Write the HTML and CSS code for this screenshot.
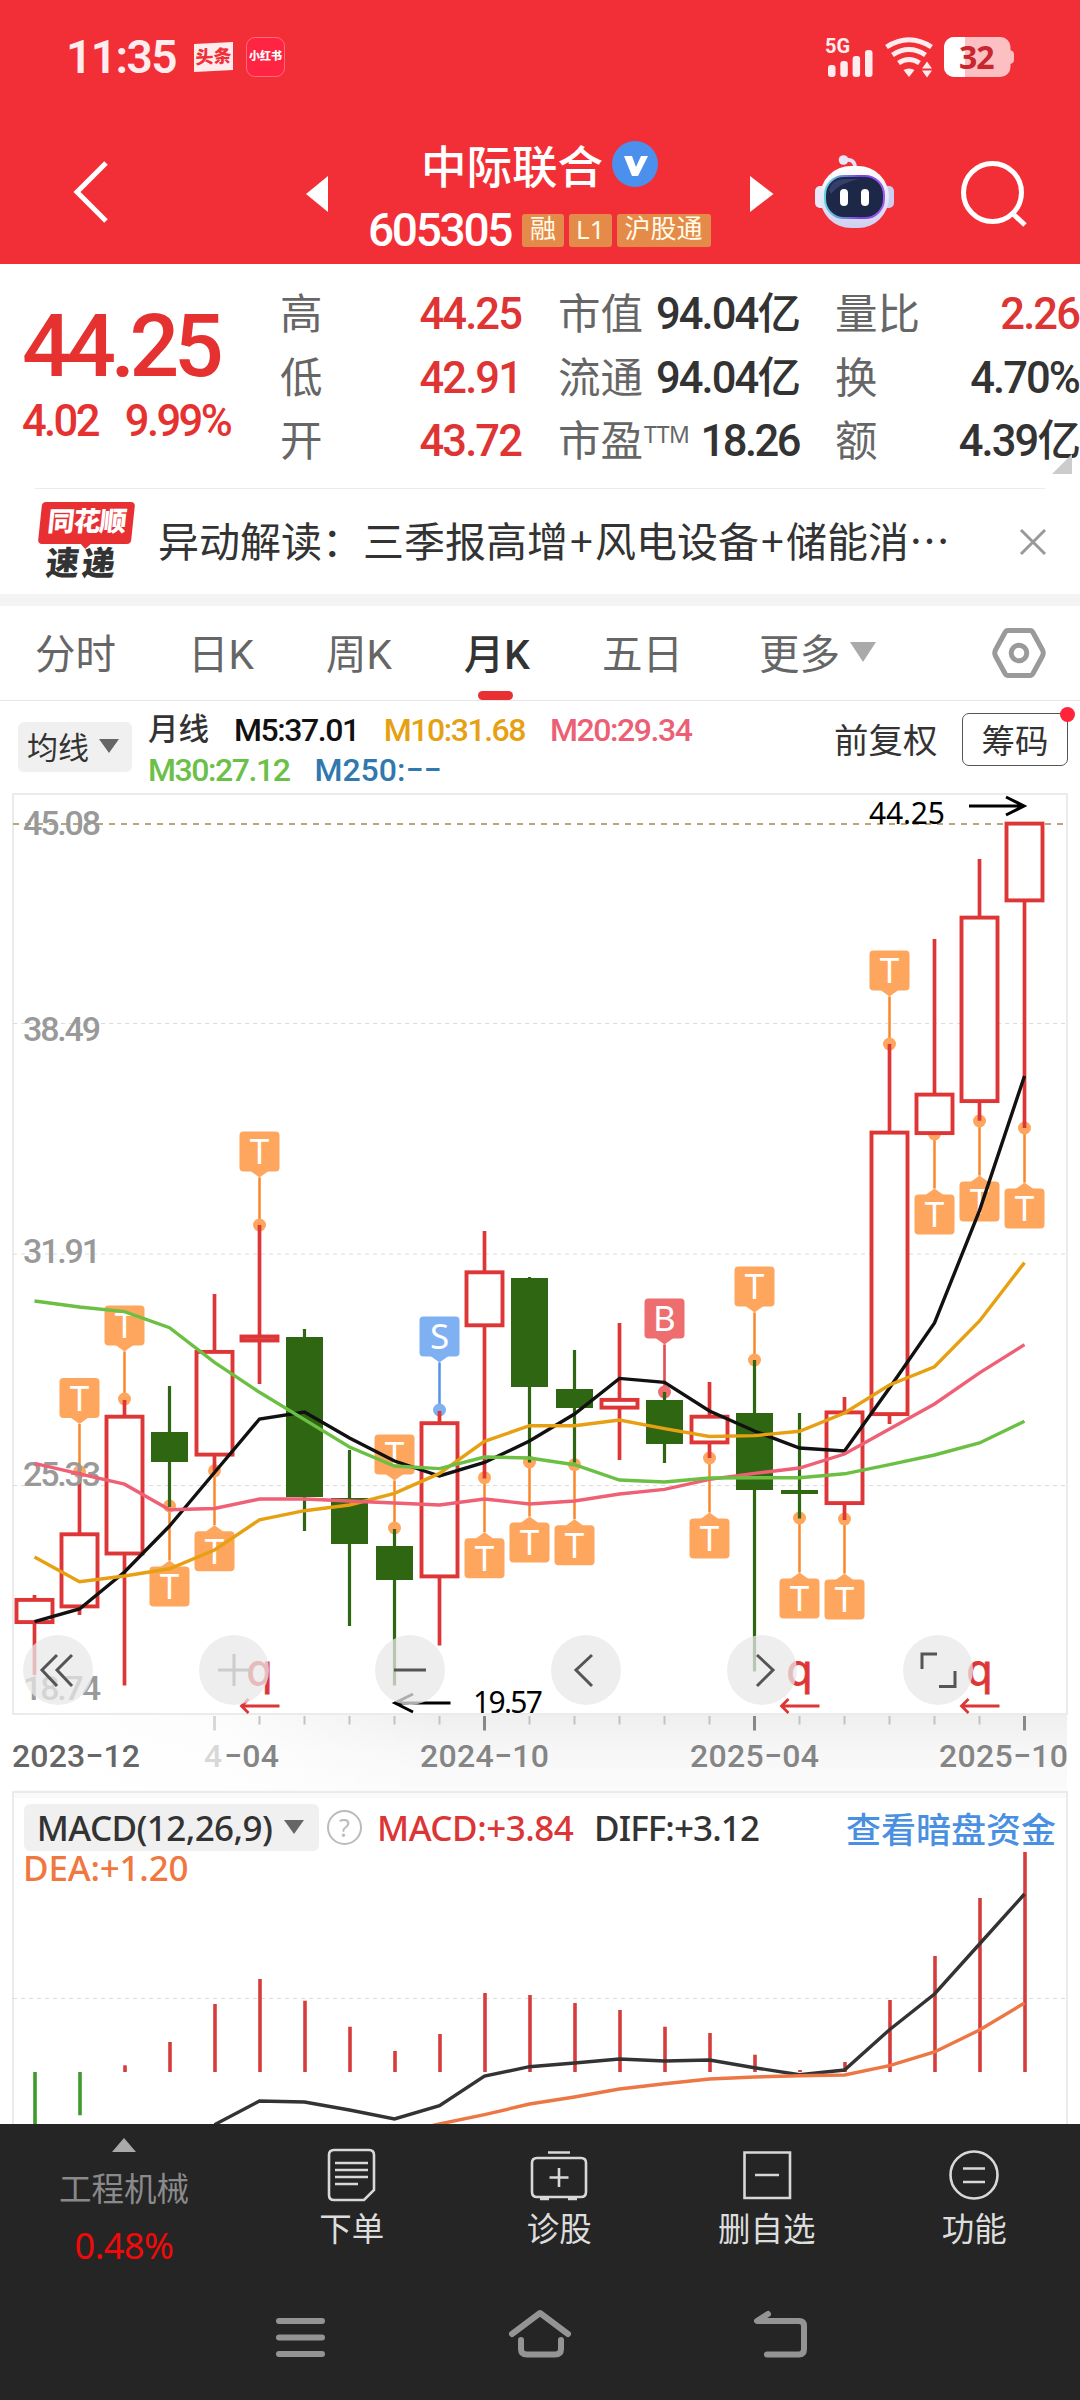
FILE: index.html
```html
<!DOCTYPE html>
<html lang="zh-CN">
<head>
<meta charset="UTF-8">
<meta name="viewport" content="width=device-width, initial-scale=1.0">
<title>中际联合 605305</title>
<link rel="stylesheet" href="styles.css">
</head>
<body>

<header class="top">
    <div class="status">
        <span class="time">11:35</span>
        <span class="app-toutiao">头条</span>
        <span class="app-xhs">小红书</span>
        <svg class="status-icons" width="192" height="44" viewBox="824 35 192 44">
            <text class="net" x="825" y="53">5G</text>
            <g fill="#ffecee">
                <rect x="828" y="65" width="7.5" height="12" rx="3"/>
                <rect x="840.3" y="61" width="7.5" height="16" rx="3"/>
                <rect x="852.6" y="56" width="7.5" height="21" rx="3"/>
                <rect x="865" y="50" width="7.5" height="27" rx="3"/>
                <path d="M903.5 70 Q909 67 914.500 70 L909 77 Z"/>
                <path d="M922 68.500 l5-7 l5 7 z M922 70.500 l5 7 l5-7 z"/>
            </g>
            <g fill="none" stroke="#ffecee" stroke-width="5">
                <path d="M886.500 47 Q909 32.500 931.500 47"/>
                <path d="M892.500 55 Q909 44 925.500 55"/>
                <path d="M898.500 63 Q909 56 919.500 63"/>
            </g>
            <rect x="944" y="37" width="66.500" height="40" rx="10" fill="#fcbfc2"/>
            <path d="M1010 50 q4 1 4 4 v6 q0 3 -4 4 z" fill="#fcbfc2"/>
            <path d="M965 37 h-11 a10 10 0 0 0 -10 10 v20 a10 10 0 0 0 10 10 h11 z" fill="#fff"/>
            <text class="battery" x="959" y="68.500">32</text>
        </svg>
    </div>
    <div class="nav">
        <svg class="back" width="40" height="66" viewBox="0 0 40 66"><path d="M35 4 L6 33 L35 62"/></svg>
        <svg class="prev" width="22" height="36" viewBox="0 0 22 36"><path d="M22 0 V36 L0 18 Z" fill="#fff"/></svg>
        <div class="stock">
            <div class="stock-name">中际联合
                <svg width="46" height="46" viewBox="0 0 46 46"><circle cx="23" cy="23" r="23" fill="#4a90ec"/><path d="M12 15 h8 l4 11 l5-11 h7 l-10 20 h-6 z" fill="#fff"/></svg>
            </div>
            <div class="stock-code"><span class="code">605305</span><i>融</i><i class="l1">L1</i><i>沪股通</i></div>
        </div>
        <svg class="next" width="24" height="36" viewBox="0 0 24 36"><path d="M0 0 V36 L23.500 18 Z" fill="#fff"/></svg>
        <svg class="robot" width="80" height="76" viewBox="814 154 80 76">
            <defs>
                <linearGradient id="shell" x1="0" y1="0" x2="0" y2="1"><stop offset="0" stop-color="#fff"/><stop offset="1" stop-color="#cfd0f0"/></linearGradient>
                <linearGradient id="rim" x1="0" y1="0" x2="1" y2="0"><stop offset="0" stop-color="#5fd0e0"/><stop offset=".6" stop-color="#7a3fe0"/><stop offset="1" stop-color="#9a5cf0"/></linearGradient>
            </defs>
            <path d="M844 160 q11-2 11 8" fill="none" stroke="#e4e0f5" stroke-width="4"/>
            <circle cx="843.500" cy="160" r="4.800" fill="#e8e6f8"/>
            <rect x="815" y="186" width="12" height="22" rx="5" fill="#e9e8fa"/>
            <rect x="882" y="186" width="12" height="22" rx="5" fill="#cdcdf0"/>
            <rect x="820" y="166" width="69" height="62" rx="31" fill="url(#shell)"/>
            <rect x="825" y="176" width="59" height="42" rx="19" fill="#1d2748" stroke="url(#rim)" stroke-width="2"/>
            <path d="M829 190 q3-11 16-11 h14 q-20 4-28 15 z" fill="#35406a"/>
            <rect x="840" y="189" width="8" height="17" rx="4" fill="#fff"/>
            <rect x="861" y="189" width="8" height="17" rx="4" fill="#fff"/>
        </svg>
        <svg class="search" width="68" height="68" viewBox="960 160 68 68"><circle cx="992.500" cy="192.500" r="29"/><path d="M1012 213 L1025 225"/></svg>
    </div>
</header>

<section class="quote">
    <div class="price">
        <div class="last">44.25</div>
        <div class="change"><span>4.02</span><span>9.99%</span></div>
    </div>
    <dl class="c1">
        <div><dt>高</dt><dd class="up">44.25</dd></div>
        <div><dt>低</dt><dd class="up">42.91</dd></div>
        <div><dt>开</dt><dd class="up">43.72</dd></div>
    </dl>
    <dl class="c2">
        <div><dt>市值</dt><dd>94.04亿</dd></div>
        <div><dt>流通</dt><dd>94.04亿</dd></div>
        <div><dt>市盈<sup>TTM</sup></dt><dd>18.26</dd></div>
    </dl>
    <dl class="c3">
        <div><dt>量比</dt><dd class="up">2.26</dd></div>
        <div><dt>换</dt><dd>4.70%</dd></div>
        <div><dt>额</dt><dd>4.39亿</dd></div>
    </dl>
    <span class="corner"></span>
</section>

<section class="news">
    <div class="news-logo"><b>同花顺</b><em>速递</em></div>
    <p>异动解读：三季报高增<u>+</u>风电设备<u>+</u>储能消…</p>
    <svg width="28" height="28" viewBox="0 0 28 28"><path d="M2 2 L26 26 M26 2 L2 26" stroke="#999" stroke-width="3"/></svg>
</section>

<nav class="tabs">
    <a>分时</a><a>日K</a><a>周K</a><a class="active">月K</a><a>五日</a><a>更多<span class="tri"></span></a>
    <svg width="56" height="54" viewBox="0 0 56 54"><path d="M17 4.500 H39 Q41 4.500 42 6.500 L51.500 24 Q53 27 51.500 30 L42 47.500 Q41 49.500 39 49.500 H17 Q15 49.500 14 47.500 L4.500 30 Q3 27 4.500 24 L14 6.500 Q15 4.500 17 4.500 Z"/><circle cx="28" cy="27" r="7.800"/></svg>
</nav>

<section class="ma">
    <button class="ma-btn">均线<span class="tri"></span></button>
    <div class="ma-list">
        <div><span class="cn">月线</span><span class="m5">M5:37.01</span><span class="m10">M10:31.68</span><span class="m20">M20:29.34</span></div>
        <div><span class="m30">M30:27.12</span><span class="m250">M250:−−</span></div>
    </div>
    <span class="adjust">前复权</span>
    <button class="chips">筹码</button>
</section>

<section class="kline">
    <svg id="kline" width="1080" height="1000" viewBox="0 790 1080 1000">
        <defs>
            <linearGradient id="haze" x1="0" y1="0" x2="0" y2="1"><stop offset="0" stop-color="#efefef"/><stop offset=".5" stop-color="#f7f7f7"/><stop offset="1" stop-color="#fbfbfb"/></linearGradient>
            <linearGradient id="fade" x1="0" y1="0" x2="1" y2="0"><stop offset="0" stop-color="#fff"/><stop offset=".5" stop-color="#fff" stop-opacity=".8"/><stop offset="1" stop-color="#fff" stop-opacity="0"/></linearGradient>
        </defs>
        <rect x="14" y="1715" width="1053" height="75" fill="url(#haze)"/>
        <rect x="14" y="1715" width="420" height="75" fill="url(#fade)"/>
        <rect class="frame" x="13" y="794" width="1054" height="920"/>
        <path class="grid" d="M13 1023.500 H1066 M13 1254 H1066 M13 1485.500 H1066"/>
        <path class="limit" d="M13 824 H1066"/>
        <g id="marks"></g>
        <g id="candles"></g>
        <g class="scale">
            <text x="23" y="835" textLength="78">45.08</text>
            <text x="23" y="1041" textLength="78">38.49</text>
            <text x="23" y="1263" textLength="78">31.91</text>
            <text x="23" y="1486" textLength="78">25.33</text>
            <text x="23" y="1700" textLength="78">18.74</text>
        </g>
        <g id="lines"></g>
        <g class="peak">
            <text x="869" y="824" textLength="76">44.25</text>
            <path d="M969 806 H1024 M1006 797 L1024 806 L1006 815"/>
            <text x="473" y="1712.500" textLength="70">19.57</text>
            <path d="M450.500 1703 H396 M413 1694 L395 1703 L413 1712"/>
        </g>
        <g id="rights"></g>
        <g id="ticks"></g>
        <g class="dates">
            <text x="12" y="1767" textLength="128" fill="#666">2023−12</text>
            <text x="204" y="1767" fill="#d8d8d8">4</text>
            <text x="224" y="1767" textLength="55">−04</text>
            <text x="420" y="1767" textLength="129">2024−10</text>
            <text x="690" y="1767" textLength="129">2025−04</text>
            <text x="939" y="1767" textLength="129">2025−10</text>
        </g>
    </svg>
    <div class="tools">
        <span><svg viewBox="0 0 70 70"><path d="M34 20 L19 35 L34 51 M49 20 L34 35 L49 51"/></svg></span>
        <span class="off"><svg viewBox="0 0 70 70"><path d="M19 35 H51 M35 19 V51"/></svg></span>
        <span><svg viewBox="0 0 70 70"><path d="M19 35 H51"/></svg></span>
        <span><svg viewBox="0 0 70 70"><path d="M41 20 L25 35 L41 51"/></svg></span>
        <span><svg viewBox="0 0 70 70"><path d="M30 20 L46 35 L30 51"/></svg></span>
        <span><svg viewBox="0 0 70 70"><path d="M19 34 V19 H34 M36 51.500 H52 V36"/></svg></span>
    </div>
</section>

<section class="macd">
    <svg id="macd" width="1080" height="334" viewBox="0 1790 1080 334">
        <rect x="14" y="1790" width="1053" height="8" fill="#fafafa"/>
        <path class="frame" d="M13 2124 V1792 H1067 V2124"/>
        <path class="grid" d="M13 1998.500 H1066"/>
        <g id="bars"></g>
        <g id="diff"></g>
    </svg>
    <div class="macd-head">
        <button class="macd-btn"><span class="fit">MACD(12,26,9)</span><span class="tri"></span></button>
        <span class="help">?</span>
        <span class="macd-v">MACD:+3.84</span>
        <span class="diff-v">DIFF:+3.12</span>
        <a>查看暗盘资金</a>
    </div>
    <div class="dea-v">DEA:+1.20</div>
</section>

<footer>
    <div class="actions">
        <div class="sector"><span class="tri-up"></span><span>工程机械</span><b>0.48%</b></div>
        <div class="act"><svg viewBox="0 0 60 60"><path d="M12 5 H47 Q52 5 52 10 V45 L42 55 H12 Q7 55 7 50 V10 Q7 5 12 5 Z M13 18 H46 M13 25 H46 M13 32 H46 M13 39 H36"/></svg>下单</div>
        <div class="act"><svg viewBox="0 0 60 60"><path d="M8 13 H52 Q57 13 57 18 V47 Q57 52 52 52 H8 Q3 52 3 47 V18 Q3 13 8 13 Z M19 7.500 H41 M30 23 V42 M20.500 32.500 H39.500 M11 54 H20 M39 54 H48"/></svg>诊股</div>
        <div class="act"><svg viewBox="0 0 60 60"><path d="M7.500 7.500 H53 V53 H7.500 Z M18 30 H42"/></svg>删自选</div>
        <div class="act"><svg viewBox="0 0 60 60"><circle cx="30" cy="30" r="23.500"/><path d="M19 23.500 H41 M19 37 H41"/></svg>功能</div>
    </div>
    <div class="sysnav">
        <svg width="64" height="60" viewBox="268 2308 64 60"><path d="M279 2321 H322 M279 2337.500 H322 M279 2354 H322"/></svg>
        <svg width="64" height="60" viewBox="508 2308 64 60"><path d="M512 2334 L540 2313 L568 2334 M521 2340 V2349 Q521 2354.500 527 2354.500 H555 Q561 2354.500 561 2349 V2340"/></svg>
        <svg width="64" height="60" viewBox="748 2308 64 60"><path d="M768 2314 L757 2321 H799 Q804 2321 804 2326 V2349 Q804 2354.500 799 2354.500 H767"/></svg>
    </div>
</footer>

<script>
    const NS = 'http://www.w3.org/2000/svg';
    const step = 45;
    const cx = i => 34.5 + step * i;

    function add(parent, tag, attrs, text) {
        const el = document.createElementNS(NS, tag);
        for (const k in attrs) el.setAttribute(k, attrs[k]);
        if (text) el.textContent = text;
        document.getElementById(parent).appendChild(el);
    }

    // direction, high, body top, body bottom, low
    const candles = [
        ['u', 1595, 1598, 1624, 1675], ['u', 1472, 1532.4, 1608.3, 1615], ['u', 1400, 1414.8, 1555.4, 1685.5],
        ['d', 1386, 1432, 1462, 1507], ['u', 1294, 1350, 1456.5, 1471], ['u', 1225, 1334.6, 1342.4, 1384],
        ['d', 1329, 1337, 1497, 1531], ['d', 1450, 1498, 1544, 1626], ['d', 1529, 1546, 1580, 1685.5],
        ['u', 1411, 1421.3, 1578.3, 1645.5], ['u', 1231, 1270.4, 1327.2, 1478.6], ['d', 1277, 1278, 1387, 1462.5],
        ['d', 1350, 1389, 1408, 1462.5], ['u', 1323, 1398, 1409.5, 1460], ['d', 1392, 1400, 1444, 1463],
        ['u', 1382, 1414.8, 1444.3, 1458], ['d', 1360, 1413, 1490, 1671.6], ['d', 1413, 1490, 1494, 1518.5],
        ['u', 1397, 1410.5, 1505, 1520], ['u', 1044, 1130.7, 1416, 1424], ['u', 939, 1092.7, 1135, 1135],
        ['u', 859, 915.7, 1103, 1120.7], ['u', 822, 821.7, 902.3, 1128]
    ];
    candles.forEach(([dir, high, top, bottom, low], i) => {
        const x = cx(i);
        add('candles', 'path', { class: 'wick ' + dir, d: `M${x} ${high} V${top + 1} M${x} ${bottom - 1} V${low}` });
        if (dir === 'u') {
            add('candles', 'rect', { class: 'body-u', x: x - 18, y: top + 1.9, width: 36, height: bottom - top - 3.8 });
        } else {
            add('candles', 'rect', { class: 'body-d', x: x - 18.5, y: top, width: 37, height: bottom - top });
        }
    });

    // index, y of the dot, letter, flag above (1) or below (0)
    const marks = [
        [1, 1471.6, 'T', 1], [2, 1399, 'T', 1], [3, 1506, 'T', 0], [4, 1470.8, 'T', 0], [5, 1225, 'T', 1],
        [8, 1528, 'T', 1], [9, 1410, 'S', 1], [10, 1477.7, 'T', 0], [11, 1462, 'T', 0], [12, 1464.7, 'T', 0],
        [14, 1392, 'B', 1], [15, 1458, 'T', 0], [16, 1360, 'T', 1], [17, 1518, 'T', 0], [18, 1519, 'T', 0],
        [19, 1044, 'T', 1], [20, 1134, 'T', 0], [21, 1121, 'T', 0], [22, 1128, 'T', 0]
    ];
    const colors = { T: ['#ffa65e', '#f08a35'], S: ['#7fb1f2', '#5b94dd'], B: ['#ee6e70', '#dd4f55'] };
    marks.forEach(([i, y, letter, above]) => {
        const x = cx(i);
        const top = above ? y - 93.5 : y + 60.5;
        const [fill, line] = colors[letter];
        const tip = above ? top + 46 : top - 6;
        const base = above ? top + 39.5 : top + 0.5;
        add('marks', 'path', { d: `M${x} ${y} V${tip}`, stroke: fill, 'stroke-width': 3 });
        add('marks', 'path', { d: `M${x} ${y} V${tip}`, stroke: line, 'stroke-width': 1.2 });
        add('marks', 'circle', { cx: x, cy: y, r: 6.5, fill });
        add('marks', 'path', { d: `M${x - 9} ${base} H${x + 9} L${x} ${tip} Z`, fill });
        add('marks', 'rect', { x: x - 20, y: top, width: 40, height: 40, rx: 4, fill });
        add('marks', 'text', { class: 'flag', x, y: top + 32.5 }, letter);
    });

    function line(parent, ys, color, first, width) {
        const points = ys.map((y, n) => `${cx(n + first)},${y}`).join(' ');
        add(parent, 'polyline', { points, fill: 'none', stroke: color, 'stroke-width': width });
    }
    line('lines', [1621.7, 1609, 1572, 1526, 1472.5, 1419, 1412, 1438, 1461, 1476, 1462.5, 1441, 1414, 1378.4, 1382.3, 1411, 1431, 1448, 1451, 1388, 1323, 1210.6, 1076], '#111', 0, 3.4);
    line('lines', [1557, 1581.8, 1576, 1568.8, 1550, 1519.8, 1510.7, 1505, 1493.3, 1473.4, 1441.3, 1425.7, 1425.7, 1420, 1428.7, 1436.5, 1435.6, 1431.3, 1413, 1385, 1366.7, 1321, 1262.6], '#e6a012', 0, 3.4);
    line('lines', [1463.4, 1473.8, 1484.2, 1509.8, 1508.5, 1499, 1499, 1501, 1503, 1505, 1499, 1504, 1501, 1494, 1489.4, 1479.4, 1473.4, 1468, 1454, 1429, 1404, 1372.8, 1344.6], '#ef6075', 0, 3.4);
    line('lines', [1301, 1307, 1311.6, 1327.7, 1362.4, 1392.3, 1419.6, 1447, 1466, 1468.6, 1457, 1458, 1464.7, 1480, 1482, 1478, 1477.7, 1477.7, 1473.8, 1464.7, 1455, 1443, 1421.3], '#6bc043', 0, 3.4);

    // ex-rights markers
    [5, 17, 21].forEach(i => {
        const x = cx(i);
        add('rights', 'text', { class: 'q', x, y: 1685 }, 'q');
        add('rights', 'path', { class: 'q-line', d: `M${x + 20} 1706 H${x - 18} M${x - 11} 1699 L${x - 18} 1706 L${x - 11} 1713` });
    });

    for (let i = 4; i < 23; i++) {
        const major = (i - 4) % 6 === 0;
        const color = i === 4 ? '#d8d8d8' : major ? '#888' : '#c2c2c2';
        add('ticks', 'path', { d: `M${cx(i)} 1716 V${major ? 1730.5 : 1724.5}`, stroke: color, 'stroke-width': major ? 3 : 2 });
    }

    const bars = [2140, 2115.3, 2065.3, 2042, 2004, 1979, 2000.7, 2026.7, 2051, 2034, 1993, 1995, 2003, 2010, 2026.7, 2033, 2054.7, 2070, 2062, 2000, 1956, 1898, 1852];
    bars.forEach((y, i) => {
        add('bars', 'path', { d: `M${cx(i) + 0.5} 2072 V${y}`, stroke: y > 2072 ? '#3d9a2d' : '#d63c3c', 'stroke-width': 3.6 });
    });
    line('diff', [2124.7, 2101, 2102, 2110, 2119, 2105.7, 2076, 2066.7, 2063, 2059, 2061, 2060, 2067.7, 2074.7, 2070, 2029.7, 1994, 1944, 1894], '#333', 4, 3.4);
    line('diff', [2134, 2124, 2114.7, 2104, 2097, 2089, 2083.7, 2079, 2077, 2075.7, 2075, 2065.7, 2052, 2030, 2003], '#ed7744', 8, 3.4);
</script>
</body>
</html>
```

FILE: styles.css
```css
* {
    box-sizing: border-box;
}

body {
    margin: 0;
    width: 1080px;
    height: 2400px;
    overflow: hidden;
    background: #fff;
    color: #333;
    font-family: Roboto, "Noto Sans CJK SC", sans-serif;
}

svg {
    display: block;
    flex: none;
}

button {
    border: 0;
    padding: 0;
    font-family: inherit;
    color: #333;
}

/* header */
.top {
    height: 264px;
    background: #f22f37;
    color: #fff;
}

.status {
    display: flex;
    align-items: center;
    height: 114px;
    padding: 0 64px 0 66px;
}

.time {
    width: 128px;
    font-size: 46px;
    font-weight: 600;
    letter-spacing: -1.5px;
    color: #ffecee;
}

.app-toutiao {
    width: 39px;
    height: 28px;
    line-height: 27px;
    font-size: 18px;
    font-weight: 900;
    text-align: center;
    color: #f22f37;
    background: #ffecee;
    transform: skewY(-3deg);
}

.app-xhs {
    width: 39px;
    height: 40px;
    line-height: 38px;
    margin-left: 13px;
    border: 1px solid #ff6b7d;
    border-radius: 9px;
    background: #ff2442;
    font-size: 11px;
    font-weight: 900;
    text-align: center;
}

.status-icons {
    margin-left: auto;
    overflow: visible;
}

.net {
    font: 700 20px Roboto, sans-serif;
    fill: #ffecee;
}

.battery {
    font: 700 32px "Noto Sans", sans-serif;
    letter-spacing: -1px;
    fill: #c8272f;
}

.nav {
    display: flex;
    align-items: flex-start;
    height: 150px;
}

.back {
    margin: 45px 0 0 71px;
    fill: none;
    stroke: #fff;
    stroke-width: 5;
}

.prev {
    margin: 62px 0 0 195px;
}

.stock {
    width: 422px;
    padding-left: 40px;
}

.stock-name {
    display: flex;
    align-items: center;
    gap: 9px;
    height: 60px;
    margin: 20px 0 0 53px;
    font-size: 45.500px;
    font-weight: 500;
    white-space: nowrap;
}

.stock-code {
    display: flex;
    align-items: center;
    height: 34px;
    margin-top: 19px;
}

.code {
    width: 154px;
    font-size: 46px;
    font-weight: 500;
    letter-spacing: -2.300px;
}

.stock-code i {
    height: 33px;
    line-height: 31px;
    padding: 0 8px;
    margin-right: 5px;
    border-radius: 3px;
    background: #e58b49;
    color: #fffbe8;
    font-size: 26px;
    font-style: normal;
    white-space: nowrap;
}

.stock-code .l1 {
    padding: 0 7px;
    font-family: "Noto Sans", sans-serif;
}

.next {
    margin-top: 62px;
}

.robot {
    margin: 40px 0 0 40px;
}

.search {
    margin: 46px 0 0 66px;
    fill: none;
    stroke: #fff;
    stroke-width: 5;
}

/* quote */
.quote {
    display: flex;
    position: relative;
    height: 224px;
}

.up {
    color: #de3434;
}

.price {
    width: 280px;
    padding: 37px 0 0 22px;
    color: #e63131;
    font-weight: 500;
}

.last {
    height: 90px;
    line-height: 90px;
    font-size: 87.500px;
    letter-spacing: -5.400px;
}

.change {
    display: flex;
    gap: 27px;
    margin-top: 6px;
    line-height: 50px;
    font-size: 43.500px;
    letter-spacing: -2.600px;
}

.quote dl {
    margin: 19px 0 0;
}

.quote dl div {
    display: flex;
    justify-content: space-between;
    height: 63.500px;
    line-height: 64px;
    white-space: nowrap;
}

.c1 {
    width: 241px;
}

.c2 {
    width: 241px;
}

.quote .c2 {
    margin-left: 37px;
}

.c3 {
    width: 244px;
}

.quote .c3 {
    margin-left: 36px;
}

dt {
    font-size: 42.500px;
    color: #666;
}

dt sup {
    position: relative;
    top: -13px;
    margin-left: 1px;
    font: 23px "Noto Sans", sans-serif;
    letter-spacing: -.500px;
    vertical-align: baseline;
}

dd {
    margin: 0;
    font-size: 43.500px;
    font-weight: 500;
    letter-spacing: -1.900px;
}

.c2 div:last-child dd {
    letter-spacing: -2.500px;
}

.corner {
    position: absolute;
    right: 8px;
    bottom: 14px;
    border: 10px solid #ccc;
    border-top-color: transparent;
    border-left-color: transparent;
}

/* news */
.news {
    display: flex;
    align-items: center;
    height: 106px;
    margin: 0 35px;
    border-top: 1px solid #ebebeb;
}

.news-logo {
    width: 93px;
    margin-left: 3px;
    transform: skewX(-6deg);
    text-align: center;
}

.news-logo b {
    display: block;
    position: relative;
    height: 42px;
    line-height: 40px;
    border-radius: 4px;
    background: #e83033;
    color: #fff;
    font-size: 27px;
    font-weight: 900;
    letter-spacing: -1px;
}

.news-logo b::after {
    content: "";
    position: absolute;
    left: 42px;
    top: 41px;
    border: 6px solid transparent;
    border-top-color: #e83033;
    border-bottom: 0;
}

.news-logo em {
    display: block;
    height: 36px;
    line-height: 40px;
    margin-bottom: 2px;
    color: #333;
    font-size: 33px;
    font-style: normal;
    font-weight: 900;
    letter-spacing: 3px;
}

.news p {
    flex: 1;
    margin: 0 0 6px 27px;
    font-size: 41px;
    font-family: "Noto Sans CJK SC", sans-serif;
    white-space: nowrap;
}

.news u {
    display: inline-block;
    width: 27px;
    text-align: center;
    text-decoration: none;
}

.news svg {
    margin-right: -2px;
}

/* tabs */
.tabs {
    display: flex;
    align-items: center;
    height: 107px;
    padding: 0 34px 0 35px;
    border-top: 12px solid #f4f4f4;
    border-bottom: 1px solid #e6e6e6;
    font-size: 40.500px;
    color: #666;
}

.tabs a {
    display: flex;
    align-items: center;
    position: relative;
    height: 94px;
    padding-bottom: 3px;
    margin-right: 72px;
}

.tabs a:nth-child(n+5) {
    margin-right: 76px;
}

.tabs .active {
    color: #333;
    font-weight: 500;
}

.tabs .active::after {
    content: "";
    position: absolute;
    left: 14px;
    bottom: 0;
    width: 35px;
    height: 9px;
    border-radius: 5px;
    background: #e83033;
}

.tri {
    border: 10px solid transparent;
    border-top: 14px solid #666;
    border-bottom: 0;
    margin-left: 10px;
}

.tabs .tri {
    border-width: 20px 13px 0;
    border-top-color: #aaa;
}

.tabs svg {
    margin-left: auto;
    margin-right: -1px;
    fill: none;
    stroke: #9a9a9a;
    stroke-width: 5;
}

/* moving averages */
.ma {
    display: flex;
    height: 89px;
    padding-left: 18px;
}

.ma-btn {
    display: flex;
    align-items: center;
    width: 114px;
    height: 50px;
    margin-top: 21px;
    padding: 0 0 3px 9px;
    border-radius: 6px;
    background: #f0f0f0;
    font-size: 31px;
}

.ma-list {
    width: 702px;
    padding: 9px 0 0 16px;
    font-size: 32px;
    font-weight: 500;
    white-space: nowrap;
}

.ma-list div {
    display: flex;
    gap: 25px;
    height: 40px;
    line-height: 40px;
    letter-spacing: -1.450px;
}

.ma-list .cn {
    font-size: 30.500px;
    letter-spacing: 0;
}

.m5 { color: #111; }
.m10 { color: #e6a012; }
.m20 { color: #ec6076; }
.m30 { color: #6bc048; }
.m250 { color: #3078ae; letter-spacing: 0; }

.adjust {
    line-height: 81px;
    width: 128px;
    font-size: 34.500px;
    white-space: nowrap;
}

.chips {
    position: relative;
    width: 106px;
    height: 53px;
    margin-top: 12px;
    padding-bottom: 3px;
    border: 1.500px solid #555;
    border-radius: 7px;
    background: #fff;
    font-size: 33.500px;
}

.chips::after {
    content: "";
    position: absolute;
    top: -7px;
    right: -8px;
    width: 15px;
    height: 15px;
    border-radius: 50%;
    background: #ff2438;
}

/* candles */
.kline {
    position: relative;
    height: 1000px;
}

.frame {
    fill: none;
    stroke: #ebebeb;
    stroke-width: 2;
}

.grid {
    stroke: #dcdcdc;
    stroke-width: 1;
    stroke-dasharray: 4 4;
}

.limit {
    stroke: #b9a877;
    stroke-width: 2;
    stroke-dasharray: 6 6;
}

.wick {
    stroke-width: 3.700;
}

.wick.u {
    stroke: #de3636;
}

.wick.d {
    stroke: #2f6612;
    stroke-width: 3.200;
}

.body-u {
    fill: #fff;
    stroke: #de3636;
    stroke-width: 3.900;
}

.body-d {
    fill: #2f6612;
}

.flag {
    font: 35px "Noto Sans", sans-serif;
    fill: #fff;
    text-anchor: middle;
}

.scale {
    font-size: 34px;
    font-weight: 500;
    fill: #999;
}

.peak {
    font: 30px "Noto Sans", sans-serif;
    fill: #000;
}

.peak path {
    fill: none;
    stroke: #000;
    stroke-width: 3;
}

.q {
    font: 42px "DejaVu Sans", sans-serif;
    fill: #de3636;
    stroke: #de3636;
    stroke-width: .800;
    text-anchor: middle;
}

.q-line {
    fill: none;
    stroke: #de3636;
    stroke-width: 2.800;
}

.dates {
    font-size: 32px;
    font-weight: 500;
    fill: #858585;
}

.tools {
    display: flex;
    gap: 106px;
    position: absolute;
    left: 23px;
    top: 845px;
}

.tools span {
    width: 70px;
    height: 70px;
    border-radius: 50%;
    background: rgba(232, 232, 232, .75);
}

.tools path {
    fill: none;
    stroke: #555;
    stroke-width: 3;
}

.tools .off path {
    stroke: #ccc;
}

/* macd */
.macd {
    position: relative;
    height: 334px;
    overflow: hidden;
}

.macd > svg {
    position: absolute;
    left: 0;
    top: 0;
}

.macd-head {
    position: relative;
    display: flex;
    align-items: center;
    height: 48px;
    margin: 13px 24px 0;
    font-size: 35px;
    font-family: "Noto Sans", sans-serif;
    white-space: nowrap;
}

.macd-btn {
    display: flex;
    align-items: center;
    width: 295px;
    height: 47px;
    padding-left: 11px;
    border-radius: 6px;
    background: #f0f0f0;
    font-size: 35px;
    font-weight: 500;
}

.fit {
    width: 239px;
    letter-spacing: -.600px;
}

.help {
    width: 35px;
    height: 35px;
    margin: 0 15px 0 8px;
    border: 2px solid #bbb;
    border-radius: 50%;
    font-size: 25px;
    line-height: 31px;
    text-align: center;
    color: #bbb;
}

.macd-v,
.diff-v,
.dea-v {
    font-weight: 500;
    letter-spacing: -.500px;
}

.macd-v {
    width: 217px;
    color: #dc3535;
}

.diff-v {
    letter-spacing: -.900px;
}

.macd-head a {
    margin-left: auto;
    font-family: "Noto Sans CJK SC", sans-serif;
    font-size: 35px;
    font-weight: 500;
    color: #4a90e2;
}

.dea-v {
    position: relative;
    margin-left: 23px;
    line-height: 34px;
    font-size: 35px;
    letter-spacing: -.200px;
    font-family: "Noto Sans", sans-serif;
    color: #f07840;
}

/* bottom bar */
footer {
    position: relative;
    height: 276px;
    background: #252525;
}

.actions {
    display: flex;
    height: 170px;
    padding-left: 21px;
}

.sector {
    display: flex;
    flex-direction: column;
    align-items: center;
    flex: none;
    width: 206px;
    margin-right: 21px;
    padding-top: 14px;
    font-size: 32.500px;
    line-height: 48px;
    color: #8a8a8a;
}

.tri-up {
    border: 12.500px solid transparent;
    border-top: 0;
    border-bottom: 14px solid #aaa;
    margin-bottom: 14px;
}

.sector b {
    margin-top: 8px;
    font: 36px/48px "Noto Sans", sans-serif;
    letter-spacing: -.500px;
    color: #f00a0a;
}

.act {
    display: flex;
    flex: none;
    flex-direction: column;
    align-items: center;
    width: 207.500px;
    padding-top: 21px;
    font-size: 32.500px;
    line-height: 51px;
    color: #ddd;
}

.act svg {
    width: 60px;
    height: 60px;
    fill: none;
    stroke: #d8d8d8;
    stroke-width: 2.600;
}

.sysnav {
    display: flex;
    gap: 176px;
    padding: 14px 0 0 268px;
}

.sysnav path {
    fill: none;
    stroke: #949494;
    stroke-width: 6;
    stroke-linecap: round;
    stroke-linejoin: round;
}
```
